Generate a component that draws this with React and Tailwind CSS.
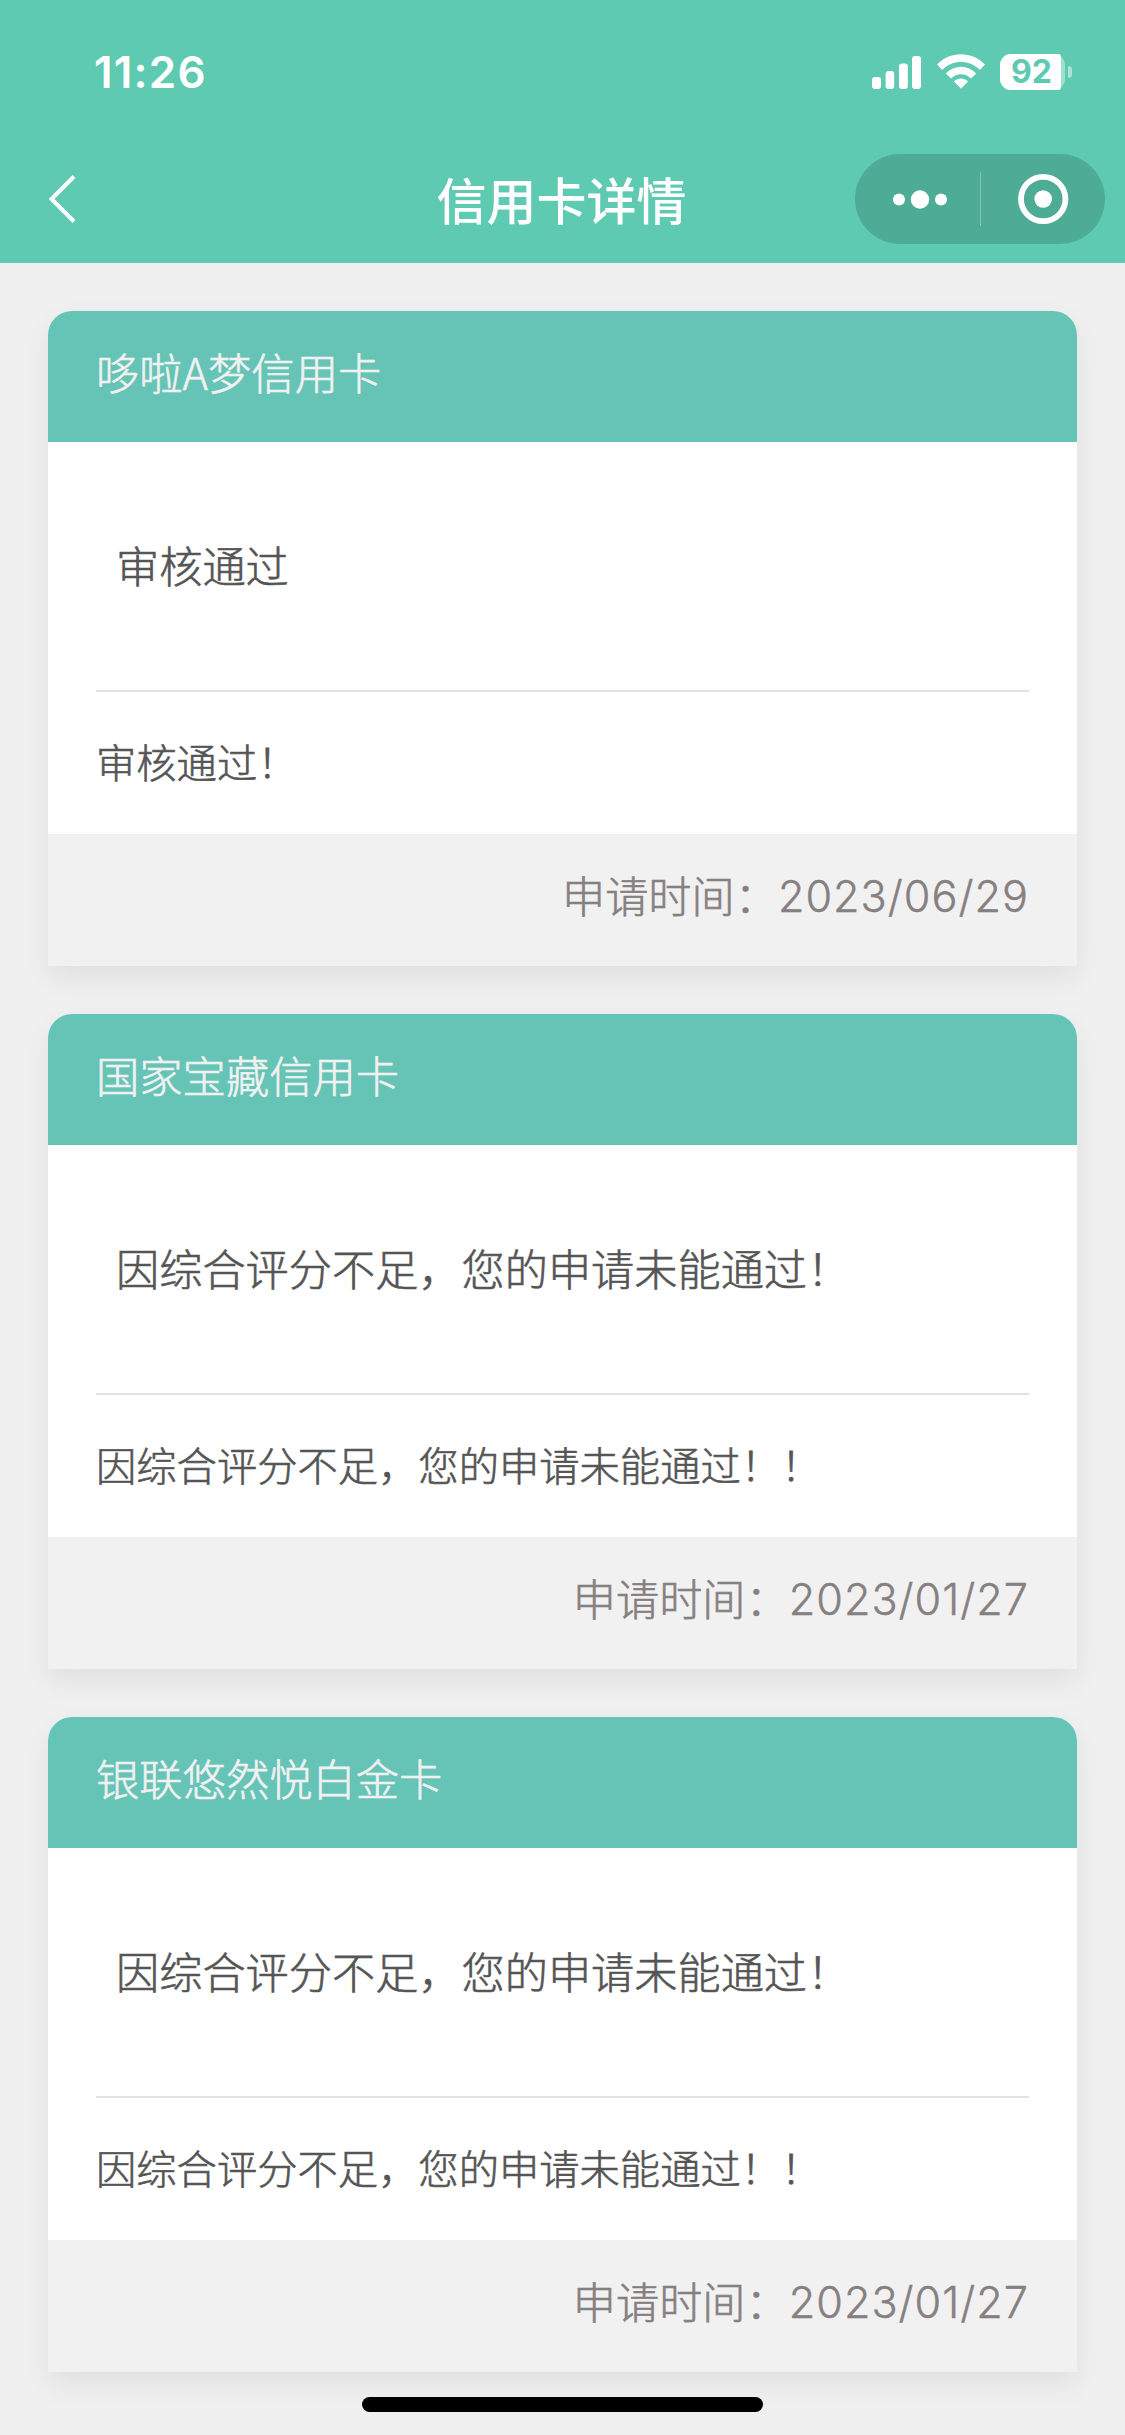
const cards = [
  { name: "哆啦A梦信用卡", status: "审核通过", detail: "审核通过！", date: "2023/06/29" },
  {
    name: "国家宝藏信用卡",
    status: "因综合评分不足，您的申请未能通过！",
    detail: "因综合评分不足，您的申请未能通过！！",
    date: "2023/01/27",
  },
  {
    name: "银联悠然悦白金卡",
    status: "因综合评分不足，您的申请未能通过！",
    detail: "因综合评分不足，您的申请未能通过！！",
    date: "2023/01/27",
  },
];

function StatusBar() {
  return (
    <div className="flex h-[144px] items-center justify-between pl-[94px] pr-[53px] font-['Inter',sans-serif] text-white">
      <span className="text-[44px] font-semibold leading-none tracking-[1.2px]">11:26</span>
      <div className="flex items-center">
        <svg className="h-9 w-[50px]" viewBox="0 0 50 36" fill="currentColor">
          <rect x="0" y="23" width="9" height="12" rx="3" />
          <rect x="13.6" y="17" width="8.6" height="18" rx="3" />
          <rect x="27" y="9.5" width="8.8" height="25.5" rx="3" />
          <rect x="40" y="2" width="9" height="33" rx="3" />
        </svg>
        <svg className="ml-[15px] h-9 w-[48px]" viewBox="0 0 48 36" fill="currentColor">
          <path d="M0 10.6 C13 -3.2 35 -3.2 48 10.6 L42.8 16 C32.5 5.4 15.5 5.4 5.2 16 Z" />
          <path d="M8.8 19.4 C17.4 10.6 30.6 10.6 39.2 19.4 L34 24.6 C28.3 18.9 19.7 18.9 14 24.6 Z" />
          <path d="M17 27.4 C21 23.6 27 23.6 31 27.4 L24 34.8 Z" />
        </svg>
        <div className="ml-[15px] h-[36px] w-[65px] rounded-[11px] bg-white/40">
          <div className="flex h-[36px] w-[61px] items-center justify-center rounded-l-[11px] rounded-r-[3px] bg-white pl-[2px] text-[32px] font-bold leading-[36px] text-[#5ecab1]">
            92
          </div>
        </div>
        <div className="ml-[3px] h-[12px] w-[4px] rounded-r-full bg-white/50" />
      </div>
    </div>
  );
}

function NavBar() {
  return (
    <div className="grid h-[110px] grid-cols-[1fr_auto_1fr] items-center text-white">
      <svg className="ml-[47px] h-[52px] w-[32px]" viewBox="0 0 32 52" fill="none" stroke="currentColor" strokeWidth="4">
        <path d="M27 3.5 L4.5 26 L27 48.5" />
      </svg>
      <h1 className="pb-[3px] pr-[2px] text-[50px] font-medium leading-none">信用卡详情</h1>
      <div className="mr-[20px] flex h-[90px] w-[250px] items-center justify-self-end rounded-full bg-[#4eab96]">
        <svg className="h-[90px] w-[250px]" viewBox="0 0 250 90" fill="currentColor">
          <circle cx="44" cy="45.5" r="6" />
          <circle cx="65" cy="45.5" r="9.2" />
          <circle cx="86" cy="45.5" r="6" />
          <rect x="125" y="18" width="1" height="54" opacity="0.3" />
          <circle cx="188.2" cy="45" r="22.2" fill="none" stroke="currentColor" strokeWidth="5.8" />
          <circle cx="188.2" cy="45" r="8.8" />
        </svg>
      </div>
    </div>
  );
}

function CreditCard({ card }) {
  return (
    <section className="flex h-[655px] flex-col overflow-hidden rounded-t-[24px] bg-white font-light text-[#555555] shadow-[0_12px_30px_rgba(0,0,0,0.07)] [-webkit-text-stroke:0.6px_currentColor]">
      <h2 className="flex h-[131px] shrink-0 items-center bg-[#65c4b6] px-12 pb-[11px] text-[43.3px] font-light text-[#f1f1f1]">
        {card.name}
      </h2>
      <div className="mx-12 flex h-[250px] shrink-0 items-center border-b-2 border-[#e2e2e2] pb-[3px] pl-5 text-[43.2px]">
        {card.status}
      </div>
      <p className="flex h-[142px] shrink-0 items-center px-12 pb-[3px] text-[40.3px]">{card.detail}</p>
      <div className="flex flex-1 items-center justify-end bg-[#f1f1f1] px-12 pb-[7px] text-[43.2px] text-[#868080]">
        <span className="pb-[4px]">申请时间：</span>
        <span className="font-['Inter',sans-serif] font-light tracking-[1px] [-webkit-text-stroke:0.4px_currentColor]">
          {card.date}
        </span>
      </div>
    </section>
  );
}

export default function App() {
  return (
    <div className="relative h-[2435px] w-[1125px] overflow-hidden bg-[#f0f0f0] font-['Noto_Sans_CJK_SC',sans-serif]">
      <header className="h-[263px] bg-[#5ecab1]">
        <StatusBar />
        <NavBar />
      </header>
      <main className="flex flex-col gap-12 px-12 pt-12">
        {cards.map((card) => (
          <CreditCard key={card.name} card={card} />
        ))}
      </main>
      {/* Home indicator */}
      <div className="absolute bottom-[23px] left-[362px] h-[15px] w-[401px] rounded-full bg-black" />
    </div>
  );
}
